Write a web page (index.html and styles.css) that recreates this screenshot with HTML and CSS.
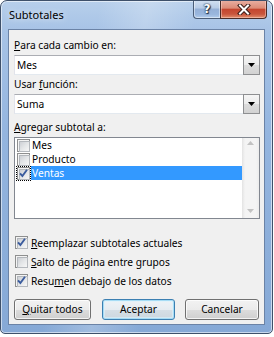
FILE: index.html
```html
<!DOCTYPE html>
<html lang="es">
<head>
<meta charset="utf-8">
<title>Subtotales</title>
<link rel="stylesheet" href="styles.css">
</head>
<body>
<div class="window">
  <div class="titlebar">
    <span class="title">Subtotales</span>
    <div class="caption">
      <div class="cap help">?</div>
      <div class="cap close">
        <svg width="14" height="11" viewBox="0 0 14 11"><path d="M3 1.5 L11 9.5 M11 1.5 L3 9.5" stroke="#3a1d18" stroke-width="4" stroke-linecap="square" fill="none"/><path d="M3 1.5 L11 9.5 M11 1.5 L3 9.5" stroke="#ffffff" stroke-width="2" stroke-linecap="square" fill="none"/></svg>
      </div>
    </div>
  </div>
  <div class="client">
    <div class="lbl"><u>P</u>ara cada cambio en:</div>
    <div class="combo">
      <span class="combo-text">Mes</span>
      <span class="drop"><svg width="7" height="4" viewBox="0 0 7 4"><path d="M0 0 H7 L3.5 4 Z" fill="#000"/></svg></span>
    </div>
    <div class="lbl">Usar <u>f</u>unción:</div>
    <div class="combo">
      <span class="combo-text">Suma</span>
      <span class="drop"><svg width="7" height="4" viewBox="0 0 7 4"><path d="M0 0 H7 L3.5 4 Z" fill="#000"/></svg></span>
    </div>
    <div class="lbl lbl-list"><u>A</u>gregar subtotal a:</div>
    <div class="listbox">
      <div class="items">
        <div class="item"><span class="cb"></span><span class="item-text">Mes</span></div>
        <div class="item"><span class="cb"></span><span class="item-text">Producto</span></div>
        <div class="item selected"><span class="cb focus"><svg class="check" width="13" height="13" viewBox="0 0 13 13"><polyline points="3,6.3 5.4,9 10,2.8" stroke="#3b5c9e" stroke-width="1.9" fill="none"/></svg></span><span class="item-text">Ventas</span></div>
      </div>
      <div class="scrollbar">
        <span class="arr up"><svg width="7" height="4" viewBox="0 0 7 4"><path d="M0 4 H7 L3.5 0 Z" fill="#c2c2c2"/></svg></span>
        <span class="arr down"><svg width="7" height="4" viewBox="0 0 7 4"><path d="M0 0 H7 L3.5 4 Z" fill="#c2c2c2"/></svg></span>
      </div>
    </div>
    <div class="options">
      <div class="opt"><span class="cb"><svg class="check" width="13" height="13" viewBox="0 0 13 13"><polyline points="3,6.3 5.4,9 10,2.8" stroke="#3b5c9e" stroke-width="1.9" fill="none"/></svg></span><span><u>R</u>eemplazar subtotales actuales</span></div>
      <div class="opt"><span class="cb"></span><span><u>S</u>alto de página entre grupos</span></div>
      <div class="opt"><span class="cb"><svg class="check" width="13" height="13" viewBox="0 0 13 13"><polyline points="3,6.3 5.4,9 10,2.8" stroke="#3b5c9e" stroke-width="1.9" fill="none"/></svg></span><span>Resu<u>m</u>en debajo de los datos</span></div>
    </div>
    <div class="buttons">
      <div class="btn btn-quitar"><u>Q</u>uitar todos</div>
      <div class="btn btn-default btn-aceptar">Aceptar</div>
      <div class="btn btn-cancelar">Cancelar</div>
    </div>
  </div>
</div>
</body>
</html>
```

FILE: styles.css
```css
* { box-sizing: border-box; }
html, body { margin: 0; padding: 0; background: #ffffff; }
body {
  width: 274px;
  height: 337px;
  overflow: hidden;
  font-family: "Noto Sans", "Open Sans", sans-serif;
  font-size: 10.2px;
  color: #000;
}
u { text-decoration: underline; text-underline-offset: 1px; }

.window {
  width: 273px;
  height: 334px;
  border: 1px solid #3e506a;
  border-radius: 7px 7px 5px 5px;
  background:
    linear-gradient(100deg, rgba(255,255,255,0) 30%, rgba(255,255,255,0.22) 45%, rgba(255,255,255,0) 60%),
    linear-gradient(180deg, #b7cfeb 0%, #a7c3e6 9%, #94b5df 40%, #86a9d6 100%);
  box-shadow: inset 0 0 0 1px rgba(255,255,255,0.55);
  display: flex;
  flex-direction: column;
  overflow: hidden;
}

.titlebar {
  height: 28px;
  flex: none;
  display: flex;
  justify-content: space-between;
  align-items: flex-start;
  padding-left: 8px;
}
.title {
  margin-top: 6px;
  font-size: 11px;
  line-height: 16px;
  color: #000;
  text-shadow: 0 0 6px rgba(255,255,255,0.9);
}
.caption {
  display: flex;
  margin-top: -1px;
  margin-right: 5px;
}
.cap {
  height: 19px;
  display: flex;
  align-items: center;
  justify-content: center;
  border: 1px solid #4b5d77;
  border-top: none;
}
.help {
  width: 27px;
  border-right: none;
  border-radius: 0 0 0 4px;
  background: linear-gradient(180deg, #d3e1f2 0%, #b7cbe6 45%, #94afd6 50%, #9ab7de 80%, #b4cdec 100%);
  box-shadow: inset 0 0 0 1px rgba(255,255,255,0.45);
  color: #fff;
  font-family: "DejaVu Sans", sans-serif;
  font-weight: bold;
  font-size: 12px;
  line-height: 12px;
  text-shadow: 0 0 1px #1d2c44, 0 0 2px #1d2c44, 1px 1px 1px #1d2c44;
}
.close {
  width: 47px;
  border-radius: 0 0 4px 0;
  border-color: #4a2c28;
  background: linear-gradient(180deg, #eab1a4 0%, #dc8b77 45%, #c5462f 52%, #c8553c 78%, #e2906f 100%);
  box-shadow: inset 0 0 0 1px rgba(255,220,210,0.45);
}

.client {
  flex: 1;
  margin: 0 7px 8px 7px;
  border: 1px solid #6b83a6;
  background: #f0f0f0;
  padding: 8px 4px 0 5px;
  display: flex;
  flex-direction: column;
}

.lbl {
  height: 15px;
  line-height: 15px;
  white-space: nowrap;
}
.lbl + .combo { margin-top: 2px; }
.combo + .lbl { margin-top: 2px; }
.lbl-list { margin-top: 6px !important; }

.combo {
  height: 20px;
  background: #fff;
  border: 1px solid #abadb3;
  border-left-color: #e2e3ea;
  border-right-color: #dbdfe6;
  border-bottom-color: #e3e9ef;
  display: flex;
  align-items: center;
  justify-content: space-between;
}
.combo-text {
  padding-left: 2px;
  line-height: 15px;
}
.drop {
  width: 17px;
  height: 20px;
  margin-right: -1px;
  border: 1px solid #8e8f91;
  background: linear-gradient(180deg, #f6f6f6 0%, #ebebeb 50%, #dcdcdc 51%, #d2d2d2 100%);
  display: flex;
  align-items: center;
  justify-content: center;
}

.listbox {
  margin-top: 2px;
  height: 82px;
  border: 1px solid #828790;
  background: #fff;
  display: flex;
}
.items {
  flex: 1;
  display: flex;
  flex-direction: column;
}
.item {
  height: 14px;
  display: flex;
  align-items: center;
  padding-left: 2px;
}
.item-text {
  flex: 1;
  height: 14px;
  line-height: 14px;
  margin-left: 1px;
  padding-left: 1px;
}
.item.selected .item-text {
  background: #3399ff;
  color: #fff;
}
.cb {
  width: 13px;
  height: 13px;
  flex: none;
  position: relative;
  border: 1px solid #8e8f8f;
  background: #f4f4f4;
}
.cb::before {
  content: "";
  position: absolute;
  left: 1px;
  top: 1px;
  width: 9px;
  height: 9px;
  border: 1px solid #b4b8bd;
  background: linear-gradient(135deg, #cdd0d5 0%, #e4e6e8 50%, #f7f7f7 100%);
}
.cb .check {
  position: absolute;
  left: -1px;
  top: -1px;
}
.cb.focus {
  outline: 1px dotted #000;
  outline-offset: 0px;
}

.scrollbar {
  width: 17px;
  flex: none;
  background: linear-gradient(90deg, #e3e3e3 0%, #f4f4f4 18%, #f4f4f4 82%, #ececec 100%);
  display: flex;
  flex-direction: column;
  justify-content: space-between;
  align-items: center;
  padding: 3px 0 5px 0;
}
.arr {
  height: 4px;
  display: flex;
}

.options {
  margin-top: 14px;
  display: flex;
  flex-direction: column;
}
.opt {
  height: 19px;
  display: flex;
  align-items: center;
  padding-left: 1px;
  white-space: nowrap;
}
.opt .cb { margin-right: 3px; }

.buttons {
  margin-top: 9px;
  display: flex;
  gap: 11px;
}
.btn {
  height: 21px;
  border: 1px solid #707070;
  border-radius: 3px;
  background: linear-gradient(180deg, #f2f2f2 0%, #ebebeb 50%, #dddddd 51%, #cfcfcf 100%);
  box-shadow: inset 0 0 0 1px rgba(255,255,255,0.75);
  display: flex;
  align-items: center;
  justify-content: center;
  line-height: 15px;
  white-space: nowrap;
}
.btn-quitar { width: 77px; }
.btn-aceptar { width: 73px; }
.btn-cancelar { width: 74px; margin-left: -1px; }
.btn-default {
  border-color: #3c7fb1;
  background: linear-gradient(180deg, #eef3f7 0%, #e6ecf1 50%, #d6dfe6 51%, #ccd7df 100%);
  box-shadow: inset 0 0 0 1px #a6dcf5, inset 0 0 0 2px rgba(220,242,252,0.6);
}
```
